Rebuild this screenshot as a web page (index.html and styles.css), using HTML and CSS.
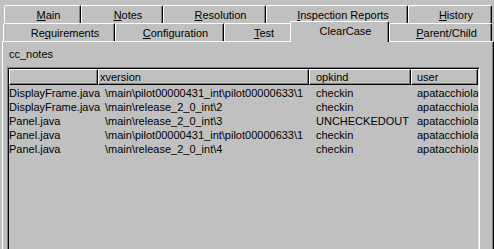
FILE: index.html
```html
<!DOCTYPE html>
<html lang="en">
<head>
    <meta charset="UTF-8">
    <title>ClearCase</title>
    <link rel="stylesheet" href="styles.css">
</head>
<body>
    <div class="tab-row back">
        <div class="tab t-main"><u>M</u>ain</div>
        <div class="tab t-notes"><u>N</u>otes</div>
        <div class="tab t-resolution"><u>R</u>esolution</div>
        <div class="tab t-inspection"><u>I</u>nspection Reports</div>
        <div class="tab t-history"><u>H</u>istory</div>
    </div>
    <div class="tab-row front">
        <div class="tab t-requirements">Re<u>q</u>uirements</div>
        <div class="tab t-configuration"><u>C</u>onfiguration</div>
        <div class="tab t-test"><u>T</u>est</div>
        <div class="tab t-clearcase active">ClearCase</div>
        <div class="tab t-parent"><u>P</u>arent/Child</div>
    </div>

    <div class="panel">
        <div class="label">cc_notes</div>
        <div class="list">
            <div class="list-head">
                <div class="hcell c1"></div>
                <div class="hcell c2">xversion</div>
                <div class="hcell c3">opkind</div>
                <div class="hcell c4">user</div>
            </div>
            <div class="list-body">
                <div class="list-row">
                    <span class="c1">DisplayFrame.java</span>
                    <span class="c2">\main\pilot00000431_int\pilot00000633\1</span>
                    <span class="c3">checkin</span>
                    <span class="c4">apatacchiola</span>
                </div>
                <div class="list-row">
                    <span class="c1">DisplayFrame.java</span>
                    <span class="c2">\main\release_2_0_int\2</span>
                    <span class="c3">checkin</span>
                    <span class="c4">apatacchiola</span>
                </div>
                <div class="list-row">
                    <span class="c1">Panel.java</span>
                    <span class="c2">\main\release_2_0_int\3</span>
                    <span class="c3">UNCHECKEDOUT</span>
                    <span class="c4">apatacchiola</span>
                </div>
                <div class="list-row">
                    <span class="c1">Panel.java</span>
                    <span class="c2">\main\pilot00000431_int\pilot00000633\1</span>
                    <span class="c3">checkin</span>
                    <span class="c4">apatacchiola</span>
                </div>
                <div class="list-row">
                    <span class="c1">Panel.java</span>
                    <span class="c2">\main\release_2_0_int\4</span>
                    <span class="c3">checkin</span>
                    <span class="c4">apatacchiola</span>
                </div>
            </div>
        </div>
    </div>
</body>
</html>
```

FILE: styles.css
```css
html, body {
    margin: 0;
    height: 100%;
    overflow: hidden;
}
body {
    background-color: #c0c0c0;
    font-family: "Liberation Sans", Arial, sans-serif;
    font-size: 11px;
    color: #000;
}

/* tabs */
.tab-row {
    display: flex;
    height: 18px;
}
.back {
    padding: 5px 0 0 4px;
}
.front {
    padding-left: 3px;
}
.tab {
    box-sizing: border-box;
    height: 18px;
    padding: 2px 0 0 12px;
    line-height: 14px;
    text-align: center;
    white-space: nowrap;
    background-color: #c0c0c0;
    border-top: 1px solid #fff;
    border-left: 1px solid #fff;
    border-right: 1px solid #000;
    border-radius: 2px 2px 0 0;
    box-shadow: inset -1px 0 #808080;
}
.tab u {
    text-underline-offset: 1px;
}
.active {
    height: 21px;
    margin: -2px 0 -1px -2px;
    position: relative;
    z-index: 1;
}
.t-main { width: 77px; }
.t-notes { width: 82px; }
.t-resolution { width: 103px; }
.t-inspection { width: 142px; }
.t-history { width: 84px; }
.t-requirements { width: 112px; }
.t-configuration { width: 109px; }
.t-test { width: 68px; }
.t-clearcase { width: 99px; }
.t-parent { width: 103px; }

/* panel, cut off by the window bottom */
.panel {
    box-sizing: border-box;
    width: 492px;
    height: 208px;
    margin-left: 2px;
    padding: 5px 0 0 4px;
    overflow: hidden;
    border-top: 1px solid #fff;
    border-left: 1px solid #fff;
    border-right: 1px solid #000;
    box-shadow: inset -1px 0 #808080;
}
.label {
    line-height: 14px;
    padding-left: 2px;
}
.list {
    box-sizing: border-box;
    width: 473px;
    height: 200px;
    margin-top: 6px;
    padding: 1px;
    border: 1px solid;
    border-color: #808080 #fff #fff #808080;
    box-shadow: inset 1px 1px #000, inset -1px -1px #dfdfdf;
}
.list-head, .list-row {
    display: grid;
    grid-template-columns: 89px 211px 102px 67px;
}
.hcell {
    box-sizing: border-box;
    height: 16px;
    line-height: 14px;
    white-space: nowrap;
    overflow: hidden;
    border-top: 1px solid #fff;
    border-left: 1px solid #fff;
    border-right: 1px solid #000;
    border-bottom: 1px solid #000;
    box-shadow: inset -1px -1px #808080;
}
.hcell.c2 { padding-left: 1px; }
.hcell.c3 { padding-left: 6px; }
.hcell.c4 { padding-left: 5px; }

.list-body {
    padding-top: 1px;
}
.list-row {
    line-height: 14px;
    white-space: nowrap;
}
.list-row span {
    overflow: hidden;
}
.list-row .c1 { overflow: visible; }
.list-row .c2 { padding-left: 7px; }
.list-row .c3 { padding-left: 7px; }
.list-row .c4 { padding-left: 6px; }
```
